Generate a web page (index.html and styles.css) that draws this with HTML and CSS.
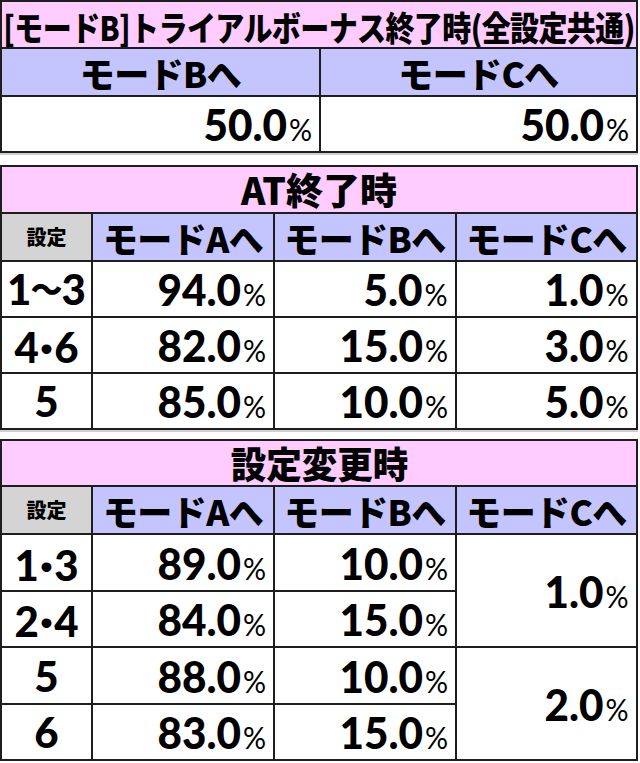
FILE: index.html
```html
<!DOCTYPE html>
<html lang="ja">
<head>
<meta charset="utf-8">
<title>モードB</title>
<link rel="stylesheet" href="styles.css">
</head>
<body>
<div class="t t2">
  <div class="c title"><span class="tx tt">[モードB]トライアルボーナス終了時(全設定共通)</span></div>
  <div class="c head"><span class="tx hh">モードBへ</span></div>
  <div class="c head"><span class="tx hh">モードCへ</span></div>
  <div class="c num"><span class="tx n">50.0<small>%</small></span></div>
  <div class="c num"><span class="tx n">50.0<small>%</small></span></div>
</div>

<div class="t t4 at">
  <div class="c title"><span class="tx tt2">AT終了時</span></div>
  <div class="c set"><span class="tx sh">設定</span></div>
  <div class="c head"><span class="tx hh">モードAへ</span></div>
  <div class="c head"><span class="tx hh">モードBへ</span></div>
  <div class="c head"><span class="tx hh">モードCへ</span></div>

  <div class="c sv"><span class="tx s">1<span class="wave">〜</span>3</span></div>
  <div class="c num"><span class="tx n">94.0<small>%</small></span></div>
  <div class="c num"><span class="tx n">5.0<small>%</small></span></div>
  <div class="c num"><span class="tx n">1.0<small>%</small></span></div>

  <div class="c sv"><span class="tx s">4<span class="dot">·</span>6</span></div>
  <div class="c num"><span class="tx n">82.0<small>%</small></span></div>
  <div class="c num"><span class="tx n">15.0<small>%</small></span></div>
  <div class="c num"><span class="tx n">3.0<small>%</small></span></div>

  <div class="c sv"><span class="tx s">5</span></div>
  <div class="c num"><span class="tx n">85.0<small>%</small></span></div>
  <div class="c num"><span class="tx n">10.0<small>%</small></span></div>
  <div class="c num"><span class="tx n">5.0<small>%</small></span></div>
</div>

<div class="t t4 chg">
  <div class="c title"><span class="tx tt3">設定変更時</span></div>
  <div class="c set"><span class="tx sh">設定</span></div>
  <div class="c head"><span class="tx hh">モードAへ</span></div>
  <div class="c head"><span class="tx hh">モードBへ</span></div>
  <div class="c head"><span class="tx hh">モードCへ</span></div>

  <div class="c sv"><span class="tx s">1<span class="dot">·</span>3</span></div>
  <div class="c num"><span class="tx n">89.0<small>%</small></span></div>
  <div class="c num"><span class="tx n">10.0<small>%</small></span></div>
  <div class="c num span1"><span class="tx n">1.0<small>%</small></span></div>

  <div class="c sv"><span class="tx s">2<span class="dot">·</span>4</span></div>
  <div class="c num"><span class="tx n">84.0<small>%</small></span></div>
  <div class="c num"><span class="tx n">15.0<small>%</small></span></div>

  <div class="c sv"><span class="tx s">5</span></div>
  <div class="c num"><span class="tx n">88.0<small>%</small></span></div>
  <div class="c num"><span class="tx n">10.0<small>%</small></span></div>
  <div class="c num span2"><span class="tx n">2.0<small>%</small></span></div>

  <div class="c sv"><span class="tx s">6</span></div>
  <div class="c num"><span class="tx n">83.0<small>%</small></span></div>
  <div class="c num"><span class="tx n">15.0<small>%</small></span></div>
</div>
</body>
</html>
```

FILE: styles.css
```css
html, body {
  margin: 0;
  padding: 0;
  background: #ffffff;
}

body {
  font-family: "Noto Sans CJK JP", "Noto Sans", sans-serif;
  font-weight: 900;
  color: #000000;
}

.t {
  display: grid;
  width: 638px;
  box-sizing: border-box;
  gap: 2px;
  padding: 2px;
  background: #1e1e1e;
  box-shadow: 0 2px 0 #d0d0d0;
}

.t2 {
  grid-template-columns: 317px 315px;
  grid-template-rows: 45px 46px 54px;
}

.t4 {
  grid-template-columns: 89px 180px 180px 179px;
}

.at {
  margin-top: 12px;
  grid-template-rows: 45px 46px 54px 54px 54px;
}

.chg {
  margin-top: 9px;
  grid-template-rows: 44px 46px 55px 54px 55px 54px;
}

.c {
  background: #ffffff;
  display: flex;
  align-items: center;
  justify-content: center;
  white-space: nowrap;
  min-width: 0;
}

.title {
  grid-column: 1 / -1;
  background: #ffccff;
}

.head {
  background: #c4c4ff;
}

.set {
  background: #d4d4d4;
}

.num {
  justify-content: flex-end;
  padding-right: 7px;
}

.span1 {
  grid-column: 4;
  grid-row: 3 / span 2;
}

.span2 {
  grid-column: 4;
  grid-row: 5 / span 2;
}

.tx {
  display: inline-block;
  line-height: 1;
}

.tt {
  font-size: 29px;
  letter-spacing: -0.6px;
  transform: translateY(2px) scaleY(1.16);
}

.tt2 {
  font-size: 37px;
}

.tt3 {
  font-size: 37px;
  transform: scaleX(0.96);
}

.hh {
  font-size: 35px;
  letter-spacing: -0.6px;
}

.sh {
  font-size: 20px;
}

.s {
  font-family: "Lato", "Noto Sans CJK JP", sans-serif;
  font-size: 42px;
}

.wave {
  font-family: "Noto Sans CJK JP", sans-serif;
  font-size: 32px;
  vertical-align: 4px;
  margin: 0 -1px;
}

.dot {
  font-size: 48px;
  margin: 0 1px;
}

.n {
  font-family: "Lato", "Noto Sans", sans-serif;
  font-size: 44px;
  transform: scaleX(0.96);
  transform-origin: right center;
}

.n small {
  font-size: 30px;
  font-weight: 400;
  margin-left: 2px;
}
```
